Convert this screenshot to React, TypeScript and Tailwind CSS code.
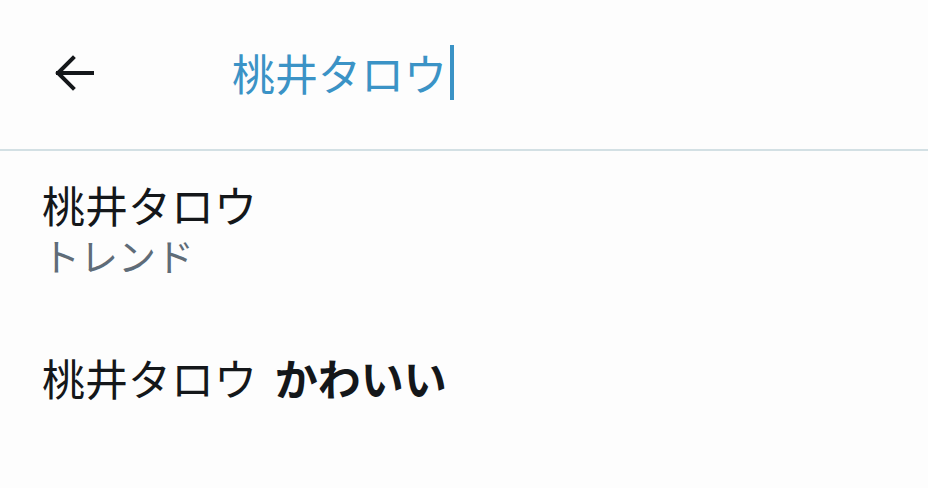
const jp = "font-['Noto_Sans_CJK_JP','Noto_Sans',sans-serif]";

const BackArrow = () => (
  <svg width="48" height="48" viewBox="0 0 24 24" fill="none" stroke="#14171a" strokeWidth="2" strokeLinecap="square">
    <path d="M21 12H4" />
    <path d="M11.5 4.5L4 12l7.5 7.5" />
  </svg>
);

export default function App() {
  return (
    <div className={`h-[488px] w-[928px] overflow-hidden bg-[#fdfdfd] ${jp}`}>
      {/* search header */}
      <div className="flex h-[151px] items-center border-b-2 border-[#d3e0e4] pb-[4px]">
        <div className="ml-[50px] flex w-[182px] items-center">
          <BackArrow />
        </div>
        <div className="flex items-center">
          <span className="text-[43px] leading-none text-[#3b93c6]">桃井タロウ</span>
          <span className="ml-[3px] h-[55px] w-[4px] bg-[#3b93c6]" />
        </div>
      </div>

      {/* suggestions */}
      <div className="flex flex-col px-[42px]">
        <div className="pt-[30px]">
          <div className="text-[43px] leading-[46px] text-[#14171a]">桃井タロウ</div>
          <div className="mt-[8px] text-[38px] leading-[40px] text-[#5f6c78]">トレンド</div>
        </div>
        <div className="pt-[78px] text-[43px] leading-[48px] text-[#14171a]">
          桃井タロウ <span className="ml-[8px] font-bold">かわいい</span>
        </div>
      </div>
    </div>
  );
}
